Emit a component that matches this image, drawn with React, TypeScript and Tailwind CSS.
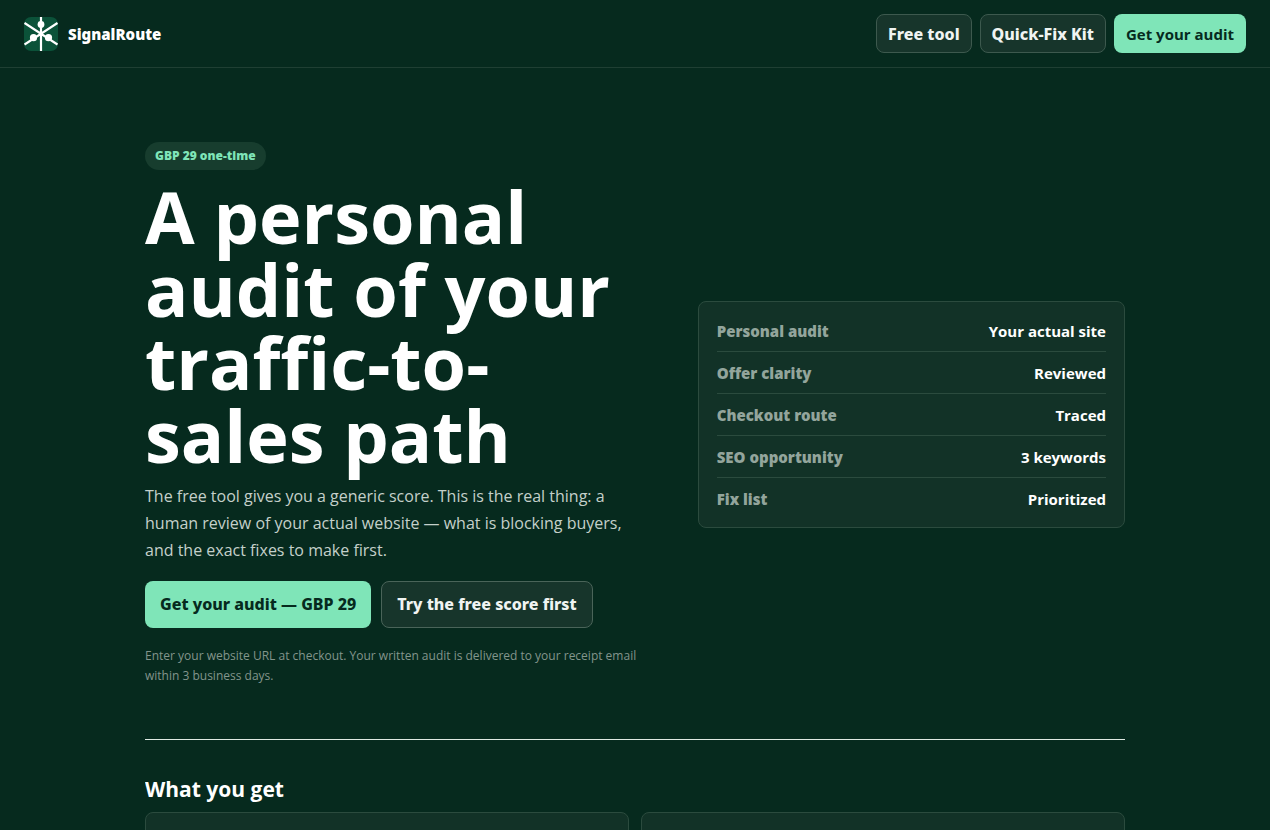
const auditRows = [
  { label: 'Personal audit', value: 'Your actual site' },
  { label: 'Offer clarity', value: 'Reviewed' },
  { label: 'Checkout route', value: 'Traced' },
  { label: 'SEO opportunity', value: '3 keywords' },
  { label: 'Fix list', value: 'Prioritized' },
];

function Logo() {
  return (
    <svg viewBox="0 0 34 34" className="size-[34px] shrink-0" aria-hidden="true">
      <rect width="34" height="34" rx="7" fill="#0b5239" />
      <path d="M17 0v34M0.5 6l33 21.5M33.5 6L0.5 27.5" stroke="#fff" strokeWidth="2.2" fill="none" />
      <g fill="#fff">
        <circle cx="17" cy="7.5" r="3.4" />
        <circle cx="9.5" cy="20.7" r="3.6" />
        <circle cx="24.5" cy="20.7" r="3.6" />
      </g>
    </svg>
  );
}

function Header() {
  return (
    <header className="flex items-center justify-between border-b border-[#1f3f33] px-6 py-[14px]">
      <a href="#home" className="flex items-center gap-[10px] font-['Noto_Sans',sans-serif] text-[15px]/6 font-black">
        <Logo />
        SignalRoute
      </a>
      <nav className="flex gap-2 font-['Noto_Sans',sans-serif] text-base/[23px] font-extrabold text-[#f0f4f2]">
        <a href="#free" className="rounded-lg border border-[#3d594e] bg-[#17352b] px-[11px] pt-2 pb-[6px]">Free tool</a>
        <a href="#kit" className="rounded-lg border border-[#3d594e] bg-[#17352b] px-[11px] pt-2 pb-[6px]">Quick-Fix Kit</a>
        <a href="#audit" className="rounded-lg bg-[#7fe5b8] px-3 pt-[9px] pb-[7px] font-['Open_Sans',sans-serif] text-[15px]/[23px] font-bold text-[#062a1e]">Get your audit</a>
      </nav>
    </header>
  );
}

export default function App() {
  return (
    <div className="min-h-screen overflow-x-hidden bg-[#062a1e] font-['Open_Sans','Noto_Sans',sans-serif] text-white">
      <Header />
      <main className="mx-auto max-w-[980px]">
        <section className="grid grid-cols-[1.2fr_1fr] items-center gap-10 border-b border-[#dfe9e3] pt-[74px] pb-[53px]">
          <div>
            <p className="w-fit rounded-full bg-[#173d2e] px-[10px] py-1 font-['Noto_Sans',sans-serif] text-xs/5 font-black text-[#7fe5b8]">GBP 29 one-time</p>
            <h1 className="mt-[10px] text-[72px]/[73px] font-bold">A personal audit of your traffic-to-sales path</h1>
            <p className="mt-[11px] max-w-[500px] text-base/[27px] text-[#c4d0ca]">
              The free tool gives you a generic score. This is the real thing: a human review of your actual website — what is blocking buyers, and the exact fixes to make first.
            </p>
            <div className="mt-[17px] flex gap-[10px] font-['Noto_Sans',sans-serif] text-base/[23px] font-extrabold">
              <a href="#audit" className="rounded-lg bg-[#7fe5b8] px-[15px] py-3 text-[#062a1e]">Get your audit — GBP 29</a>
              <a href="#free" className="rounded-lg border border-[#4a6459] bg-[#17352b] px-[15px] py-[11px] text-[#f0f4f2]">Try the free score first</a>
            </div>
            <p className="mt-[18px] text-xs/5 text-[#83958c]">
              Enter your website URL at checkout. Your written audit is delivered to your receipt email within 3 business days.
            </p>
          </div>
          <dl className="rounded-lg border border-[#2b4b3e] bg-[#123227] px-[18px] py-2 text-[15px]/[25px]">
            {auditRows.map((row) => (
              <div key={row.label} className="flex justify-between gap-4 border-b border-[#2b4b3e] pt-[9px] pb-[7px] last:border-b-0">
                <dt className="font-['Noto_Sans',sans-serif] font-black text-[#93a59c]">{row.label}</dt>
                <dd className="font-bold">{row.value}</dd>
              </div>
            ))}
          </dl>
        </section>
        <section className="h-[90px] overflow-hidden pt-[34px]">
          <h2 className="text-[21px]/[30px] font-bold">What you get</h2>
          <div className="mt-2 grid grid-cols-2 gap-3">
            <div className="h-24 rounded-lg border border-[#2b4b3e] bg-[#123227]" />
            <div className="h-24 rounded-lg border border-[#2b4b3e] bg-[#123227]" />
          </div>
        </section>
      </main>
    </div>
  );
}
